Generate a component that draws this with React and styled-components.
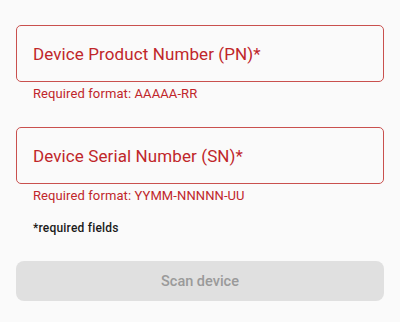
import React from "react";
import styled, { createGlobalStyle } from "styled-components";

const GlobalStyle = createGlobalStyle`
  html, body {
    margin: 0;
    padding: 0;
    background: #fafafa;
    font-family: Roboto, "Liberation Sans", sans-serif;
  }
`;

const Page = styled.div`
  width: 400px;
  height: 322px;
  box-sizing: border-box;
  padding: 25px 16px 0;
  display: flex;
  flex-direction: column;
  background: #fafafa;
`;

const Field = styled.div`
  display: flex;
  flex-direction: column;
  margin-bottom: ${(p) => p.$gap}px;
`;

const Box = styled.div`
  height: 57px;
  box-sizing: border-box;
  border: 1.5px solid #c9504e;
  border-radius: 5px;
  display: flex;
  align-items: center;
  padding: 0 16px;
  font-size: 17px;
  letter-spacing: 0.1px;
  color: #c0262a;
`;

const Helper = styled.div`
  margin-top: 4px;
  padding-left: 17px;
  font-size: 13px;
  line-height: 15px;
  letter-spacing: 0.1px;
  color: #c0262a;
`;

const Note = styled.div`
  padding-left: 17px;
  font-size: 12px;
  font-weight: 500;
  line-height: 14px;
  letter-spacing: 0.2px;
  color: #1a1a1a;
  margin-bottom: 26px;
`;

const ScanButton = styled.button`
  height: 40px;
  padding-top: 2px;
  border: none;
  border-radius: 8px;
  background: #e0e0e0;
  color: #9a9a9a;
  font-family: Roboto, "Liberation Sans", sans-serif;
  font-size: 14.5px;
  font-weight: 500;
  cursor: default;
`;

export default function App() {
  return (
    <Page>
      <GlobalStyle />
      <Field $gap={26}>
        <Box>Device Product Number (PN)*</Box>
        <Helper>Required format: AAAAA-RR</Helper>
      </Field>
      <Field $gap={18}>
        <Box>Device Serial Number (SN)*</Box>
        <Helper>Required format: YYMM-NNNNN-UU</Helper>
      </Field>
      <Note>*required fields</Note>
      <ScanButton disabled>Scan device</ScanButton>
    </Page>
  );
}
